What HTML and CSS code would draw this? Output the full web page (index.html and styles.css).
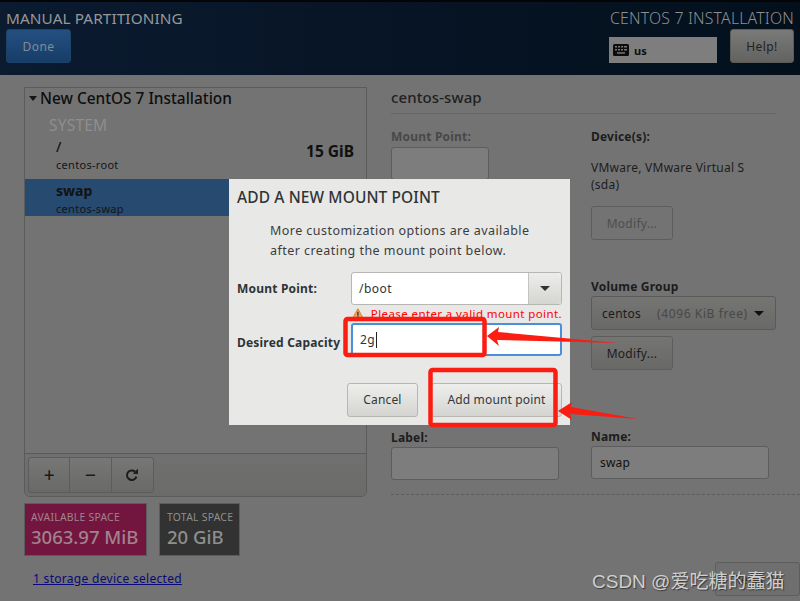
FILE: index.html
```html
<!DOCTYPE html>
<html lang="en">
<head>
<meta charset="utf-8">
<title>Manual Partitioning</title>
<link rel="stylesheet" href="styles.css">
</head>
<body>
<div class="page">
  <header class="topbar">
    <div class="top-left">
      <div class="top-title">MANUAL PARTITIONING</div>
      <button class="btn done">Done</button>
    </div>
    <div class="top-right">
      <div class="top-title light">CENTOS 7 INSTALLATION</div>
      <div class="top-controls">
        <div class="kbd">
          <svg class="kbd-icon" width="16" height="12" viewBox="0 0 16 12"><rect width="16" height="12" rx="1.5" fill="#0c0c0c"/><g fill="#777"><rect x="2" y="2" width="2" height="1.5"/><rect x="5" y="2" width="2" height="1.5"/><rect x="8" y="2" width="2" height="1.5"/><rect x="11" y="2" width="3" height="1.5"/><rect x="2" y="5" width="2" height="1.5"/><rect x="5" y="5" width="2" height="1.5"/><rect x="8" y="5" width="2" height="1.5"/><rect x="11" y="5" width="3" height="1.5"/><rect x="4" y="8.2" width="8" height="1.5"/></g></svg>
          <span class="kbd-text">us</span>
        </div>
        <button class="btn help">Help!</button>
      </div>
    </div>
  </header>

  <main class="content">
    <section class="left">
      <div class="panel">
        <div class="tree">
          <div class="tree-head"><span class="tri"></span>New CentOS 7 Installation</div>
          <div class="group">SYSTEM</div>
          <div class="row">
            <div><div class="row-name">/</div><div class="row-sub">centos-root</div></div>
            <div class="row-size">15 GiB</div>
          </div>
          <div class="row selected">
            <div><div class="row-name">swap</div><div class="row-sub">centos-swap</div></div>
          </div>
        </div>
        <div class="toolbar">
          <div class="tools">
            <button class="tool">+</button>
            <button class="tool">−</button>
            <button class="tool">
              <svg width="14" height="14" viewBox="0 0 14 14"><path d="M11.4 8.6A4.8 4.8 0 1 1 10 3.6" fill="none" stroke="#1c1c1c" stroke-width="2"/><path d="M7.6 5.8 13 6V.8z" fill="#1c1c1c"/></svg>
            </button>
          </div>
        </div>
      </div>
      <div class="spaces">
        <div class="space avail"><div class="space-label">AVAILABLE SPACE</div><div class="space-value">3063.97 MiB</div></div>
        <div class="space total"><div class="space-label">TOTAL SPACE</div><div class="space-value">20 GiB</div></div>
      </div>
      <a class="storage-link" href="#">1 storage device selected</a>
    </section>

    <section class="right">
      <h2 class="detail-title">centos-swap</h2>
      <div class="form">
        <div class="col col-a">
          <div class="label dim">Mount Point:</div>
          <div class="field short"></div>
          <div class="label label-low">Label:</div>
          <div class="field wide-a"></div>
        </div>
        <div class="col col-b">
          <div class="label">Device(s):</div>
          <p class="device">VMware, VMware Virtual S<br>(sda)</p>
          <button class="btn plain off">Modify...</button>
          <div class="label vg">Volume Group</div>
          <div class="select"><span>centos</span><span class="free">(4096 KiB free)</span><span class="tri-lg"></span></div>
          <button class="btn plain mod2">Modify...</button>
          <div class="label name">Name:</div>
          <div class="field wide-b">swap</div>
        </div>
      </div>
      <div class="dashed"></div>
      <div class="reset-row"><button class="btn plain reset">Reset All</button></div>
    </section>
  </main>

  <div class="dialog">
    <h3 class="dlg-title">ADD A NEW MOUNT POINT</h3>
    <p class="dlg-text">More customization options are available<br>after creating the mount point below.</p>
    <div class="dlg-row">
      <label class="dlg-label">Mount Point:</label>
      <div class="combo"><span class="combo-text">/boot</span><span class="combo-btn"><span class="tri-lg dark"></span></span></div>
    </div>
    <div class="warn">
      <svg width="14" height="13" viewBox="0 0 14 13"><path d="M7 .8 13.4 12.4H.6z" fill="#f0a55c" stroke="#d9772b"/><rect x="6.2" y="4.4" width="1.6" height="4.6" fill="#333"/><rect x="6.2" y="9.8" width="1.6" height="1.6" fill="#333"/></svg>
      <span>Please enter a valid mount point.</span>
    </div>
    <div class="dlg-row cap">
      <label class="dlg-label">Desired Capacity</label>
      <div class="cap-input">2g<span class="caret"></span></div>
    </div>
    <div class="dlg-actions">
      <button class="btn light-btn cancel">Cancel</button>
      <button class="btn light-btn add">Add mount point</button>
    </div>
  </div>

  <svg class="marks" width="800" height="601" viewBox="0 0 800 601">
    <rect x="345.500" y="319" width="139" height="36" rx="2" fill="none" stroke="#fb1d12" stroke-width="4.500"/>
    <rect x="430.500" y="370" width="125" height="55" rx="2" fill="none" stroke="#fb1d12" stroke-width="4.500"/>
    <polygon points="487,336 499,327 498,332 618,343 497,340 499,346" fill="#fb1d12"/>
    <polygon points="558,411 572,402 571,407 638,419 570,414 572,420" fill="#fb1d12"/>
  </svg>

  <div class="watermark">CSDN @爱吃糖的蠢猫</div>
</div>
</body>
</html>
```

FILE: styles.css
```css
* { box-sizing: border-box; }
html, body { margin: 0; padding: 0; }
body { font-family: "Noto Sans", "Open Sans", sans-serif; color: #161616; background: #737373; }
.page { position: relative; width: 800px; height: 601px; overflow: hidden; background: #737373; font-size: 12px; }
button { font-family: inherit; }

.topbar { height: 75px; border-top: 2px solid #050505; padding: 7px 6px 0; display: flex; justify-content: space-between;
  background: linear-gradient(90deg, #0b1b30 0%, #071425 50%, #03101c 100%); }
.top-title { font-size: 15.300px; line-height: 19px; color: #979797; letter-spacing: .1px; white-space: nowrap; }
.top-title.light { color: #8d8f90; text-align: right; font-size: 15.800px; font-weight: 300; letter-spacing: .2px; }
.top-left { display: flex; flex-direction: column; gap: 1px; }
.top-right { display: flex; flex-direction: column; align-items: flex-end; gap: 1px; }
.top-controls { display: flex; align-items: flex-start; gap: 13px; }

.btn { display: block; border-radius: 3px; font-size: 12px; letter-spacing: .4px; padding: 0; text-align: center; height: 34px; }
.done { width: 65px; color: #7f8d9a; background: linear-gradient(#245081, #173d68); border: 1px solid #1d4267; }
.help { width: 64px; color: #222; background: linear-gradient(#7a7a78, #626260); border: 1px solid #5a5a58; }
.kbd { width: 108px; height: 26px; margin-top: 8px; background: #7e7e7e; display: flex; align-items: center; gap: 5px; padding-left: 4px; }
.kbd-text { font-size: 11px; font-weight: 700; color: #101010; }

.content { display: flex; height: 524px; padding: 12px 0 0 24px; }
.left { width: 343px; flex: none; display: flex; flex-direction: column; }
.panel { height: 410px; border: 1px solid #5b5b5b; border-radius: 0 0 6px 6px; display: flex; flex-direction: column; }
.tree { flex: 1; }
.tree-head { height: 21px; font-size: 15.400px; line-height: 21px; font-weight: 500; color: #0e0e0e; padding-left: 4px; display: flex; align-items: center; white-space: nowrap; }
.tri { width: 0; height: 0; border-left: 4.500px solid transparent; border-right: 4.500px solid transparent; border-top: 5px solid #151515; margin-right: 3px; }
.group { margin: 6px 0 0 24px; height: 20px; font-size: 15.500px; line-height: 20px; color: #8e8e8e; letter-spacing: .2px; }
.row { display: flex; justify-content: space-between; align-items: center; padding: 0 12px 4px 31px; height: 44px; }
.row-name { font-size: 14px; line-height: 19px; font-weight: 500; color: #121212; }
.row-sub { font-size: 11px; line-height: 17px; color: #151515; letter-spacing: .3px; }
.row-size { font-size: 15.500px; font-weight: 700; color: #101010; margin-bottom: 9px; }
.row.selected { height: 37px; padding: 3px 12px 0 31px; background: #264a70; }
.row.selected .row-name { line-height: 20px; font-weight: 700; }
.row.selected .row-sub { line-height: 16px; }
.toolbar { height: 43px; border-top: 1px solid #5a5a5a; background: linear-gradient(#707070, #6b6b69); padding: 3px 0 0 3px; border-radius: 0 0 6px 6px; }
.tools { display: flex; width: 126px; height: 36px; border: 1px solid #5c5c5a; border-radius: 3px; background: linear-gradient(#777775, #696967); }
.tool { width: 42px; height: 34px; border: 0; border-right: 1px solid #5c5c5a; background: none; font-size: 19px; line-height: 30px; font-weight: 500; color: #1a1a1a; padding: 0; display: flex; align-items: center; justify-content: center; }
.tool:last-child { border-right: 0; }

.spaces { display: flex; gap: 12px; margin-top: 6px; }
.space { height: 53px; border: 1px solid #5c5c5c; padding: 7px 6px 0; color: #8f8f8f; }
.space.avail { width: 123px; background: #72163f; color: #a28290; }
.space.total { width: 81px; padding-left: 7px; background: #323232; }
.space-label { font-size: 10.400px; line-height: 13px; letter-spacing: .25px; white-space: nowrap; }
.space-value { font-size: 18.500px; line-height: 26px; font-weight: 500; white-space: nowrap; }
.storage-link { margin: 15px 0 0 9px; font-size: 12px; line-height: 16px; color: #090979; letter-spacing: .3px; white-space: nowrap; }

.right { margin-left: 24px; width: 385px; flex: none; display: flex; flex-direction: column; }
.detail-title { margin: 0; height: 27px; font-size: 15px; line-height: 20px; font-weight: 500; color: #1f1f1f; border-bottom: 1px solid #676767; letter-spacing: .1px; white-space: nowrap; }
.form { display: flex; margin-top: 13px; }
.col { display: flex; flex-direction: column; align-items: flex-start; }
.col-a { width: 200px; }
.col-b { flex: 1; }
.label { height: 16px; font-size: 12px; line-height: 19px; font-weight: 700; color: #1c1c1c; letter-spacing: .2px; white-space: nowrap; }
.label.dim { color: #484848; }
.label-low { margin-top: 248px; }
.field { height: 33px; border: 1px solid #5d5d5d; border-radius: 3px; background: #7d7d7d; margin-top: 3px; font-size: 12px; line-height: 32px; padding-left: 8px; color: #111; letter-spacing: .2px; }
.short { width: 98px; margin-top: 4px; }
.wide-a { width: 168px; }
.wide-b { width: 178px; }
.device { margin: 16px 0 0; font-size: 12px; line-height: 17px; color: #1d1d1d; letter-spacing: .25px; white-space: nowrap; }
.plain { width: 82px; border: 1px solid #5d5d5b; background: linear-gradient(#757573, #686866); color: #1c1c1c; letter-spacing: .3px; }
.off { margin-top: 13px; background: #737373; color: #4e4e4e; }
.vg { margin-top: 37px; }
.select { width: 185px; height: 34px; margin-top: 3px; border: 1px solid #5a5a58; border-radius: 3px; background: linear-gradient(#757573, #696967); display: flex; align-items: center; padding: 0 10px; font-size: 12px; letter-spacing: .3px; color: #1a1a1a; white-space: nowrap; }
.free { margin-left: 16px; color: #484848; letter-spacing: .6px; }
.tri-lg { display: inline-block; width: 0; height: 0; border-left: 5px solid transparent; border-right: 5px solid transparent; border-top: 5px solid #111; }
.select .tri-lg { margin-left: 6px; }
.mod2 { margin-top: 6px; }
.name { margin-top: 57px; }
.dashed { margin-top: 14px; border-top: 1px dashed #5c5c5c; width: 409px; }
.reset-row { display: flex; justify-content: flex-end; margin-top: 67px; width: 409px; }
.reset { width: 85px; color: #2d2d2d; background: #6f6f6f; letter-spacing: 0; }

.dialog { position: absolute; left: 229px; top: 179px; width: 341px; height: 246px; background: #e8e8e7; padding: 8px 8px 0; color: #2e3436; }
.dlg-title { margin: 0; font-size: 15.500px; line-height: 20px; font-weight: 500; color: #2e3436; letter-spacing: .1px; white-space: nowrap; }
.dlg-text { margin: 14px 0 0 33px; font-size: 12.500px; line-height: 20px; letter-spacing: .45px; color: #3a3d3e; white-space: nowrap; }
.dlg-row { display: flex; align-items: center; margin-top: 11px; }
.dlg-label { width: 114px; flex: none; font-size: 12px; font-weight: 700; color: #2e3436; letter-spacing: .2px; white-space: nowrap; }
.combo { display: flex; width: 211px; height: 33px; border: 1px solid #b6b6b3; border-radius: 3px; background: #fff; }
.combo-text { flex: 1; font-size: 12px; line-height: 31px; padding-left: 7px; letter-spacing: .5px; color: #2e3436; }
.combo-btn { width: 33px; border-left: 1px solid #c4c4c1; background: linear-gradient(#ededeb, #d5d5d2); border-radius: 0 3px 3px 0; display: flex; align-items: center; justify-content: center; }
.tri-lg.dark { border-top-color: #2e3436; }
.warn { display: flex; align-items: center; gap: 7px; height: 17px; margin: 0 0 0 115px; font-size: 11.500px; line-height: 17px; color: #f00; letter-spacing: .4px; white-space: nowrap; }
.dlg-row.cap { margin-top: 1px; }
.cap .dlg-label { padding-top: 5px; }
.cap-input { width: 211px; height: 33px; border: 2px solid #4a90d9; border-radius: 3px; background: #fff; font-size: 12px; line-height: 29px; padding-left: 7px; letter-spacing: .4px; color: #2e3436; display: flex; align-items: center; }
.caret { width: 1px; height: 16px; background: #222; margin-left: 1px; }
.dlg-actions { display: flex; justify-content: flex-end; gap: 13px; margin-top: 27px; }
.light-btn { border: 1px solid #b6b6b3; background: linear-gradient(#eeeeec, #d4d4d1); color: #33383a; letter-spacing: .15px; padding-bottom: 2px; }
.cancel { width: 71px; }
.add { width: 131px; }

.marks { position: absolute; left: 0; top: 0; pointer-events: none; }
.watermark { position: absolute; left: 592px; top: 570px; font-family: "Liberation Sans", "Noto Sans CJK SC", sans-serif; font-size: 19px; line-height: 24px; color: #cfcfcf; text-shadow: 1px 1px 1px #3a3a3a; white-space: nowrap; }
```
